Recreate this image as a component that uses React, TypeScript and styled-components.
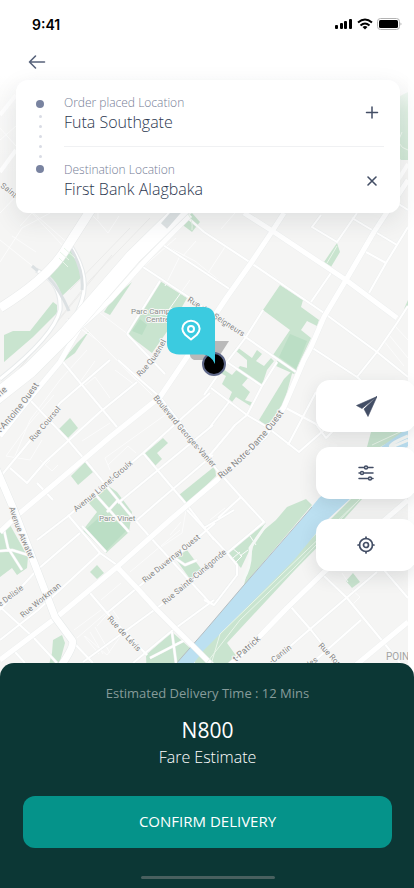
import React from "react";
import styled, { createGlobalStyle } from "styled-components";

const GlobalStyle = createGlobalStyle`
  * { box-sizing: border-box; }
  body { margin: 0; background: #fff; font-family: "Open Sans", "Noto Sans", sans-serif; }
  button { font: inherit; border: 0; padding: 0; background: none; cursor: pointer; }
`;

const Screen = styled.main`
  display: flex;
  flex-direction: column;
  min-height: 100vh;
  position: relative;
  overflow: hidden;
`;

const Stage = styled.section`
  flex: 1;
  display: flex;
  flex-direction: column;
  position: relative;
`;

const MapSvg = styled.svg`
  position: absolute;
  inset: 0 6px -20px 0;
  width: calc(100% - 6px);
  height: calc(100% + 20px);
  font-family: Roboto, sans-serif;
`;

const Haze = styled.div`
  position: absolute;
  inset: 0 0 auto 0;
  height: 180px;
  background: linear-gradient(#fff 42%, rgba(255, 255, 255, 0.4) 62%, rgba(255, 255, 255, 0));
`;

const StatusBar = styled.header`
  position: relative;
  display: flex;
  justify-content: space-between;
  align-items: center;
  height: 46px;
  padding: 4px 12px 0 32px;
`;

const Clock = styled.time`
  font: 600 14px/20px Inter, sans-serif;
  color: #000;
`;

const TopNav = styled.nav`
  position: relative;
  display: flex;
  height: 34px;
  padding-left: 28px;
`;

const BackButton = styled.button`
  display: flex;
  align-items: center;
  height: 32px;
`;

const RouteCard = styled.section`
  position: relative;
  display: grid;
  grid-template-columns: 48px 1fr;
  margin: 0 14px 0 16px;
  padding: 0 16px 0 0;
  height: 133px;
  background: #fff;
  border-radius: 12px;
  box-shadow: 0 8px 24px rgba(40, 50, 60, 0.1);
`;

const Track = styled.div`
  display: flex;
  flex-direction: column;
  align-items: center;
  justify-content: space-between;
  height: 73px;
  margin-top: 20px;
`;

const Dot = styled.span<{ $small?: boolean }>`
  width: ${(p) => (p.$small ? 3 : 8)}px;
  height: ${(p) => (p.$small ? 3 : 8)}px;
  border-radius: 50%;
  background: ${(p) => (p.$small ? "#d9dce5" : "#7983a0")};
`;

const Stop = styled.div`
  display: flex;
  align-items: center;
  justify-content: space-between;
  height: 66px;
  padding-right: 4px;
  & + & { border-top: 1px solid #f0f1f3; }
`;

const StopLabel = styled.div`
  font-size: 12px;
  font-weight: 300;
  line-height: 18px;
  color: #757d96;
`;

const StopName = styled.div`
  font-size: 16px;
  font-weight: 300;
  line-height: 20px;
  color: #2c3850;
`;

const IconButton = styled.button`
  display: flex;
`;

const Pin = styled.svg`
  position: absolute;
  left: calc(50% - 47px);
  top: 300px;
`;

const Tools = styled.div`
  position: relative;
  display: flex;
  flex-direction: column;
  align-items: flex-end;
  margin: 167px -2px 92px 0;
`;

const ToolButton = styled.button<{ $gap?: number }>`
  display: flex;
  align-items: center;
  justify-content: center;
  width: 100px;
  height: 52px;
  margin-top: ${(p) => p.$gap ?? 0}px;
  background: #fff;
  border-radius: 14px;
  box-shadow: 0 6px 18px rgba(40, 50, 60, 0.12);
`;

const Sheet = styled.section`
  position: relative;
  display: flex;
  flex-direction: column;
  align-items: center;
  padding: 20px 22px 9px 23px;
  background: #0c3735;
  border-radius: 14px 14px 0 0;
  text-align: center;
`;

const Eta = styled.p`
  margin: 0;
  font-size: 13px;
  line-height: 20px;
  color: #869b9a;
`;

const Price = styled.strong`
  margin-top: 12px;
  font-size: 21px;
  font-weight: 400;
  line-height: 30px;
  color: #fff;
`;

const PriceNote = styled.span`
  font-size: 16px;
  font-weight: 300;
  line-height: 24px;
  color: #fff;
`;

const Confirm = styled.button`
  && {
    width: 100%;
    height: 52px;
    margin-top: 27px;
    padding-bottom: 2px;
    background: #05938a;
    border-radius: 12px;
    font-size: 15px;
    color: #fff;
  }
`;

const HomeBar = styled.span`
  width: 134px;
  height: 3px;
  margin-top: 28px;
  border-radius: 2px;
  background: #49605f;
`;

const parks = [
  "70,248 76,256 82,277 60,298 48,277",
  "4,335 13,331 30,331 53,302 57,305 57,313 33,337 4,362",
  "132,282 110,315 104,312 113,298",
  "90,330 75,353 60,364 77,343",
  "160,281 187,298 173,323 152,353 127,334",
  "192,213 200,222 192,232 180,223",
  "280,285 303,300 301,307 319,320 317,326 307,321 301,330 311,338 296,370 273,355 290,330 263,310",
  "337,243 340,252 331,267 324,262",
  "293,370 284,403 267,427 259,420 284,379",
  "278,358 298,370 294,374 276,366",
  "237,347 252,358 257,350 262,354 256,361 264,366 271,358 274,361 267,370 262,385 248,378 242,385 250,392 245,400 254,403 252,407 236,397 232,402 229,399 232,392 222,384 226,376 217,371 220,367 232,375 240,366 247,368 247,360 236,351",
  "70,418 78,428 68,438 59,429",
  "85,462 93,472 78,485 71,476",
  "163,438 168,443 157,453 162,459 154,467 143,455",
  "107,485 117,492 132,512 129,532 106,553 83,530 97,512 88,502",
  "215,466 216,476 187,504 179,495",
  "0,530 10,525 28,557 27,568 17,575 12,568 0,577",
  "97,565 104,573 97,579 90,572",
  "175,558 187,550 202,570 190,579",
  "172,632 190,648 177,680 147,680 146,655",
  "62,635 65,643 55,680 45,680 52,653 53,640",
  "276,520 287,507 306,499 312,505 244,585 254,543 264,530",
  "266,523 252,545 241,568 227,553",
  "363,498 337,527 294,571 227,643 237,657 225,680 195,680 195,655 290,560 352,498",
  "367,447 371,432 408,424 408,432 380,447",
  "353,573 360,582 352,588 346,581",
  "408,301 408,306 404,309 408,300",
];

const darkParks = [
  "290,334 307,341 296,369 279,357",
  "103,514 128,529 106,551 84,531",
  "140,319 147,325 142,335 132,331",
];

const lanes = [
  "M30 210 70 245M0 240 40 272M0 213 22 190M0 262 22 228 50 213M12 236 36 252M32 213 64 247M22 190 32 213 20 226",
  "M90 213 98 221 108 233 119 216M98 212 98 219",
  "M77 326 97 340 152 395M100 313 129 335M82 325 100 343 136 380M77 325 87 334",
  "M160 243 195 261 231 290M196 241 182 257M0 128 16 146M0 140 16 126M180 256 165 286M176 238 143 267M190 280 165 315M225 247 208 273M235 213 221 229",
  "M95 361 80 382M87 350 60 380 30 420 10 468M63 362 82 385 117 427M30 400 68 440",
  "M42 440 30 460 6 456 30 423 54 395M40 460 52 471 58 465M50 460 45 465M82 441 110 423M85 385 95 377 110 398M115 370 135 385M108 465 128 446 136 453M110 470 105 458 165 415",
  "M97 626 112 609 119 619M74 630 101 610M77 638 107 612M95 627 110 653M90 632 103 654M84 636 99 654M112 615 120 637 107 655 85 636",
  "M186 510 182 533 158 549M181 522 170 535M130 572 180 530M101 600 121 583",
  "M394 325 408 340M389 335 408 358M384 341 404 366M225 508 210 520",
  "M248 550 240 556M232 548 242 556 236 562M256 545 250 536M240 552 233 558",
  "M352 590 360 597 353 604M342 573 348 582",
];

const streets = [
  "M143 267 190 298 244 336 296 372",
  "M187 217 204 232 251 263 324 313 377 352 408 377",
  "M160 243 195 266 231 290",
  "M127 334 160 281 M127 334 165 374",
  "M321 215 312 227 337 242 357 213M352 218 397 245M366 252 386 263M408 227 386 263 369 293M331 273 311 302M397 203 408 210",
  "M311 347 357 377 377 352 397 323 408 306M357 377 377 395",
  "M263 310 246 337 227 362 204 395M211 388 247 415 267 427 299 452 324 430",
  "M227 362 262 386M262 386 277 362M247 415 262 386M284 407 316 424 326 438 340 424M316 392 288 445",
  "M229 402 210 427 M247 415 235 425 210 455 204 458",
  "M0 477 33 437 60 403 110 360M10 468 27 483 45 462 67 442 100 412 137 382",
  "M30 400 68 440 85 460 128 512 150 537 210 603",
  "M63 362 82 385 117 427",
  "M118 360 137 377 160 397 217 470 241 497 264 522 227 553",
  "M143 453 187 505 214 540M210 393 143 453 67 517 37 540",
  "M213 425 118 503M213 455 160 500 137 520",
  "M68 515 100 553 117 565M0 610 37 570 80 533M0 640 38 610 100 553M37 483 53 500",
  "M0 607 33 637 57 663M15 652 25 663M73 642 93 663M90 593 107 613 147 655M107 613 137 588 187 547 215 523",
  "M83 662 157 608 214 564M133 663 173 630 214 600M187 510 204 528 227 553 237 565 237 575 214 605 204 600",
  "M204 528 234 510",
  "M321 573 347 598 384 643 404 668M384 570 408 598M291 607 311 630 337 663",
  "M377 572 344 600 309 630 265 668M361 620 310 665M241 497 218 518",
  "M94 493 129 532M107 512 118 500M82 526 106 552",
  "M0 551 12 550 28 555M4 530 8 548 22 570M175 558 185 565 197 560M150 658 185 640M172 632 176 663",
];

const avenues = [
  "M244 213 274 232 346 280 397 318M284 213 271 233 251 263 227 297 187 357 160 397 110 437 83 460 20 513 0 532",
  "M408 180 374 232 346 280 324 317 311 347 304 360 284 407 264 437 217 480 170 520 117 567 57 617 0 660",
  "M117 567 137 588 157 610 190 643 215 668",
  "M408 500 324 572 287 608 261 635 225 670",
  "M408 622 350 670",
  "M190 215 143 263 110 300 80 327 60 362 30 398 0 436",
];

const labels: { d: string; text: string; size?: number }[] = [
  { d: "M0 187Q12 194 22 208", text: "Saint-" },
  { d: "M187 301 246 339", text: "Rue des Seigneurs" },
  { d: "M140 377Q158 360 171 332", text: "Rue Quesnel" },
  { d: "M153 398Q184 437 222 478", text: "Boulevard Georges-Vanier" },
  { d: "M221 479Q263 446 293 399", text: "Rue Notre-Dame Ouest", size: 9 },
  { d: "M76 512Q107 488 139 458", text: "Avenue Lionel-Groulx" },
  { d: "M33 442 69 400", text: "Rue Coursol" },
  { d: "M0 433Q22 411 44 378", text: "t-Antoine Ouest", size: 9 },
  { d: "M0 397 18 381", text: "rie", size: 9 },
  { d: "M9 508Q16 532 36 572", text: "Avenue Atwater" },
  { d: "M23 618 69 580", text: "Rue Workman" },
  { d: "M0 607 40 577", text: "e Delisle" },
  { d: "M145 583 213 528", text: "Rue Duvernay Ouest" },
  { d: "M165 605 239 543", text: "Rue Sainte-Cunégonde" },
  { d: "M107 619 146 661", text: "Rue de Lévis" },
  { d: "M236 662 274 628", text: "t-Patrick", size: 9 },
  { d: "M272 664 302 641", text: "-Cantin" },
  { d: "M310 667 330 652", text: "les" },
  { d: "M318 646 350 680", text: "Rue Ropery" },
];

function CityMap() {
  return (
    <MapSvg viewBox="0 0 408 690" preserveAspectRatio="xMinYMin slice" role="img" aria-label="City map">
      <rect width="408" height="690" fill="#f5f5f4" />
      <g fill="#c9e4cf">
        {parks.map((p) => <polygon key={p} points={p} />)}
      </g>
      <path d="M392 100 408 92V160L401 160Q390 150 400 130Z" fill="#c9e4cf" />
      <g fill="#bbdec5">{darkParks.map((p) => <polygon key={p} points={p} />)}</g>
      <path d="M408 428 381 447 319 498 301 520 244 585 204 632 165 677H183L204 650 294 560 327 520 351 498 408 446Z" fill="#bce0f1" />
      <path d="M312 507 244 585 204 632 160 682" fill="none" stroke="#b5bdc1" />
      <g fill="none" strokeLinejoin="round">
        <g stroke="#ebebea" strokeWidth="1">
          <path d="M0 393 90 280 150 218M10 380 112 255M20 386 120 272 M70 290 130 228" />
        </g>
        <g stroke="#fcfcfc" strokeWidth="1">{lanes.map((d) => <path key={d} d={d} />)}</g>
        <g stroke="#eef0f0" strokeWidth="3">{streets.map((d) => <path key={d} d={d} />)}</g>
        <g stroke="#fff" strokeWidth="2">{streets.map((d) => <path key={d} d={d} />)}</g>
        <path d="M70 245Q90 275 82 300T67 320M36 270Q62 282 60 310Q54 336 0 379" stroke="#e7eaeb" strokeWidth="5" />
        <path d="M70 245Q90 275 82 300T67 320M36 270Q62 282 60 310Q54 336 0 379" stroke="#fff" strokeWidth="3" />
        <path d="M70 247Q84 270 82 290M48 277Q60 290 69 311M32 266 38 271" stroke="#dce1e3" strokeWidth="3" />
        <g stroke="#eef0f0" strokeWidth="6">{avenues.map((d) => <path key={d} d={d} />)}</g>
        <g stroke="#fff" strokeWidth="5">{avenues.map((d) => <path key={d} d={d} />)}</g>
        <path d="M-4 468 14 510 55 617 72 640Q76 645 58 670" stroke="#e6eaea" strokeWidth="8" />
        <path d="M-4 468 14 510 55 617 72 640Q76 645 58 670" stroke="#fff" strokeWidth="7" />
        <path d="M92 208 67 247Q50 277 0 308" stroke="#e8eaea" strokeWidth="10" />
        <path d="M92 208 67 247Q50 277 0 308" stroke="#fff" strokeWidth="9" />
        <path d="M187 204 133 257 67 333 30 370 -8 400" stroke="#eaecec" strokeWidth="16" />
        <path d="M187 204 133 257 67 333 30 370 -8 400" stroke="#fff" strokeWidth="15" />
        <path d="M178 210 164 226" stroke="#dfe4e5" strokeWidth="8" />
        <path d="M360 499 294 568 240 620 205 665M357 502 280 576 220 634 210 668M400 432 372 445M60 252 69 260M64 248 75 258M59 258 68 267M188 214Q193 220 192 230M337 246 327 263" stroke="#e9f5ea" strokeWidth="1" />
        <path d="M408 436Q385 446 392 447L408 440M266 525 250 548Q252 565 243 580" stroke="#f5f8f6" strokeWidth="3" />
        <path d="M402 132Q394 146 408 150" stroke="#e9f5ea" strokeWidth="1" />
        <path d="M0 115 16 95M0 172 16 150M398 180 408 164" stroke="#fff" strokeWidth="4" />
      </g>
      <g fill="#858585" stroke="#f7f7f6" strokeWidth="2" strokeLinejoin="round" paintOrder="stroke">
        <defs>
          {labels.map((l, i) => <path key={l.text} id={`street-${i}`} d={l.d} />)}
        </defs>
        {labels.map((l, i) => (
          <text key={l.text} fontSize={l.size ?? 8}>
            <textPath href={`#street-${i}`}>{l.text}</textPath>
          </text>
        ))}
        <g fill="#8c918d" fontSize="8">
          <text x="131" y="314">Parc Campbell</text>
          <text x="146" y="322">Centre</text>
          <text x="99" y="521">Parc Vinet</text>
        </g>
        <text x="386" y="660" fontSize="10" fill="#a3a3a3">POINTE</text>
      </g>
    </MapSvg>
  );
}

const ink = "#434e65";

export default function App() {
  return (
    <>
      <GlobalStyle />
      <Screen>
        <Stage>
          <CityMap />
          <Haze />
          <StatusBar>
            <Clock>9:41</Clock>
            <svg width="68" height="14" viewBox="0 0 68 14" aria-label="Signal, Wi-Fi and battery">
              <rect x="1" y="7" width="3" height="4" rx="1" />
              <rect x="6" y="5" width="3" height="6" rx="1" />
              <rect x="10" y="3" width="3" height="8" rx="1" />
              <rect x="15" y="1" width="3" height="10" rx="1" />
              <g fill="none" stroke="#000" strokeWidth="2">
                <path d="M24 4.500Q31 -1.500 38 4.500" />
                <path d="M26.500 7.500Q31 3.500 35.500 7.500" />
              </g>
              <path d="M28.500 9Q31 7 33.500 9L31 11.500Z" />
              <rect x="43.500" y="0.500" width="22" height="11" rx="3" fill="none" stroke="#b3b3b3" />
              <rect x="45" y="2" width="19" height="8" rx="1.500" />
              <path d="M66.500 4.500Q68.500 6 66.500 7.500Z" fill="#aaa" />
            </svg>
          </StatusBar>
          <TopNav>
            <BackButton aria-label="Back">
              <svg width="18" height="16" viewBox="0 0 18 16" fill="none" stroke="#57627a" strokeWidth="1.600" strokeLinecap="round" strokeLinejoin="round">
                <path d="M16.500 8H1.500M7.500 2 1.500 8 7.500 14" />
              </svg>
            </BackButton>
          </TopNav>
          <RouteCard>
            <Track>
              <Dot />
              {[0, 1, 2, 3, 4].map((n) => <Dot key={n} $small />)}
              <Dot />
            </Track>
            <div>
              <Stop>
                <div>
                  <StopLabel>Order placed Location</StopLabel>
                  <StopName>Futa Southgate</StopName>
                </div>
                <IconButton aria-label="Add stop">
                  <svg width="16" height="16" viewBox="0 0 16 16" stroke={ink} strokeWidth="1.500" strokeLinecap="round">
                    <path d="M8 2V13M2.500 7.500H13.500" />
                  </svg>
                </IconButton>
              </Stop>
              <Stop>
                <div>
                  <StopLabel>Destination Location</StopLabel>
                  <StopName>First Bank Alagbaka</StopName>
                </div>
                <IconButton aria-label="Remove stop">
                  <svg width="16" height="16" viewBox="0 0 16 16" stroke={ink} strokeWidth="1.600" strokeLinecap="round">
                    <path d="M4 5 12 13M12 5 4 13" />
                  </svg>
                </IconButton>
              </Stop>
            </div>
          </RouteCard>
          <Pin width="70" height="80" viewBox="160 300 70 80" aria-label="Pickup point">
            <path d="M190 352 200 341H229L220 355 208 360H194Q189 358 190 352Z" fill="#b9b9b9" />
            <circle cx="214" cy="364" r="11" fill="#000" stroke="#5e6788" strokeWidth="2" />
            <path d="M179 307H203Q215 307 215 319V364Q211 355 203 354.500H179Q167 354 167 343V319Q167 307 179 307Z" fill="#3bcbe0" />
            <g fill="none" stroke="#fff" strokeWidth="2" strokeLinejoin="round">
              <path d="M191 339.500 185.200 334.700C181.500 331 181.500 326.500 184.800 323.300C188.300 319.900 193.700 319.900 197.200 323.300C200.500 326.500 200.500 331 196.800 334.700Z" />
              <circle cx="191" cy="329" r="3" />
            </g>
          </Pin>
          <Tools>
            <ToolButton aria-label="Navigate">
              <svg width="22" height="22" viewBox="0 0 22 22" fill={ink}>
                <path d="M22 1.500 1.500 10.500 7 13.500ZM22 1.500 9 14 13 21.500Z" stroke={ink} strokeWidth="0.600" strokeLinejoin="round" />
              </svg>
            </ToolButton>
            <ToolButton aria-label="Filters" $gap={15}>
              <svg width="16" height="16" viewBox="0 0 16 16" fill="#fff" stroke={ink} strokeWidth="1.500" strokeLinecap="round">
                <path d="M1 2.500H15M1 8H15M1 13.500H15" />
                <circle cx="8" cy="2.500" r="1.500" />
                <circle cx="4" cy="8" r="1.500" />
                <circle cx="12" cy="13.500" r="1.500" />
              </svg>
            </ToolButton>
            <ToolButton aria-label="Locate me" $gap={20}>
              <svg width="18" height="18" viewBox="0 0 18 18" fill="none" stroke={ink} strokeWidth="1.700" strokeLinecap="round">
                <circle cx="9" cy="9" r="6.500" />
                <circle cx="9" cy="9" r="2.500" />
                <path d="M9 1V2.500M9 15.500V17M1 9H2.500M15.500 9H17" />
              </svg>
            </ToolButton>
          </Tools>
        </Stage>
        <Sheet>
          <Eta>Estimated Delivery Time : 12 Mins</Eta>
          <Price>N800</Price>
          <PriceNote>Fare Estimate</PriceNote>
          <Confirm>CONFIRM DELIVERY</Confirm>
          <HomeBar />
        </Sheet>
      </Screen>
    </>
  );
}
